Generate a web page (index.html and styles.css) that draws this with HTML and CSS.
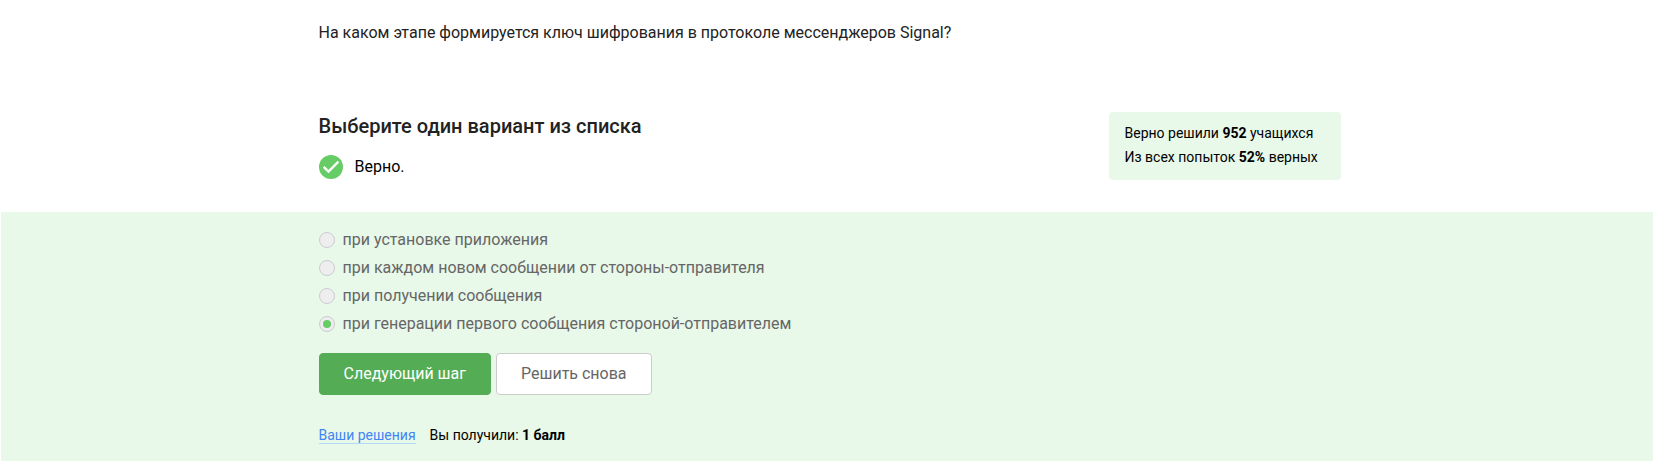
FILE: index.html
```html
<!DOCTYPE html>
<html lang="ru">
<head>
<meta charset="utf-8">
<meta name="viewport" content="width=device-width, initial-scale=1">
<title>Выберите один вариант из списка</title>
<link rel="stylesheet" href="styles.css">
</head>
<body>
<main class="step">
  <section class="intro">
    <div class="container">
      <p class="question">На каком этапе формируется ключ шифрования в протоколе мессенджеров Signal?</p>
      <div class="summary">
        <div class="status">
          <h1 class="title">Выберите один вариант из списка</h1>
          <p class="verdict">
            <svg class="verdict-icon" viewBox="0 0 24 24" aria-hidden="true">
              <circle cx="12" cy="12" r="12" fill="#66cc66"/>
              <path d="M4.7 11.9 9.5 16.5 19.4 6.6" fill="none" stroke="#fff" stroke-width="2.4"/>
            </svg>
            <span>Верно.</span>
          </p>
        </div>
        <aside class="stats">
          <p>Верно решили <b>952</b> учащихся</p>
          <p>Из всех попыток <b>52%</b> верных</p>
        </aside>
      </div>
    </div>
  </section>
  <form class="quiz">
    <div class="container">
      <div class="options" role="radiogroup" aria-label="Варианты ответа">
        <label class="option"><input type="radio" name="answer" disabled><span>при установке приложения</span></label>
        <label class="option"><input type="radio" name="answer" disabled><span>при каждом новом сообщении от стороны-отправителя</span></label>
        <label class="option"><input type="radio" name="answer" disabled><span>при получении сообщения</span></label>
        <label class="option"><input type="radio" name="answer" disabled checked><span>при генерации первого сообщения стороной-отправителем</span></label>
      </div>
      <div class="actions">
        <button type="button" class="button button-primary">Следующий шаг</button>
        <button type="button" class="button button-secondary">Решить снова</button>
      </div>
      <div class="result">
        <a class="link" href="#solutions">Ваши решения</a>
        <span>Вы получили: <b>1 балл</b></span>
      </div>
    </div>
  </form>
</main>
</body>
</html>
```
FILE: styles.css
```css
* {
  box-sizing: border-box;
}

body {
  margin: 0;
  background: #fff;
  color: #000;
  font: 16px/24px Roboto, "Noto Sans", sans-serif;
}

p,
h1 {
  margin: 0;
}

b {
  font-weight: 700;
}

.step {
  display: flex;
  flex-direction: column;
  min-height: 100vh;
  padding-left: 1px;
}

.intro,
.quiz {
  padding-left: 5px;
}

.container {
  max-width: 1022px;
  margin: 0 auto;
}

.intro {
  padding-top: 21px;
  padding-bottom: 32px;
}

.question {
  color: #222;
}

.summary {
  display: flex;
  justify-content: space-between;
  align-items: flex-start;
  margin-top: 67px;
}

.title {
  color: #222;
  font-size: 20px;
  line-height: 28px;
  font-weight: 500;
}

.verdict {
  display: flex;
  align-items: center;
  gap: 12px;
  margin-top: 15px;
}

.verdict-icon {
  width: 24px;
  height: 24px;
}

.stats {
  min-width: 232px;
  padding: 9px 16px 11px;
  border-radius: 4px;
  background: #e8f8e9;
  font-size: 14px;
  line-height: 24px;
}

.quiz {
  flex: 1;
  padding-top: 16px;
  padding-bottom: 14px;
  background: #e8f8e9;
}

.options {
  display: grid;
  gap: 4px;
}

.option {
  display: flex;
  align-items: center;
  gap: 8px;
  color: #666;
}

.option input {
  appearance: none;
  display: grid;
  place-items: center;
  flex: none;
  width: 16px;
  height: 16px;
  margin: 0;
  border: 1px solid #ccc;
  border-radius: 50%;
  background: #eee;
}

.option input:checked::before {
  content: "";
  width: 8px;
  height: 8px;
  border-radius: 50%;
  background: #66cc66;
}

.actions {
  display: flex;
  gap: 5px;
  margin-top: 17px;
}

.button {
  height: 42px;
  padding: 0 24px;
  border: 1px solid #ccc;
  border-radius: 4px;
  background: #fff;
  color: #666;
  font: inherit;
  cursor: pointer;
}

.button-primary {
  border-color: #54ad54;
  background: #54ad54;
  color: #fff;
}

.result {
  display: flex;
  gap: 14px;
  margin-top: 32px;
  font-size: 14px;
  line-height: 16px;
}

.link {
  border-bottom: 1px solid #b3d9f5;
  color: #4285f4;
  text-decoration: none;
}
```
